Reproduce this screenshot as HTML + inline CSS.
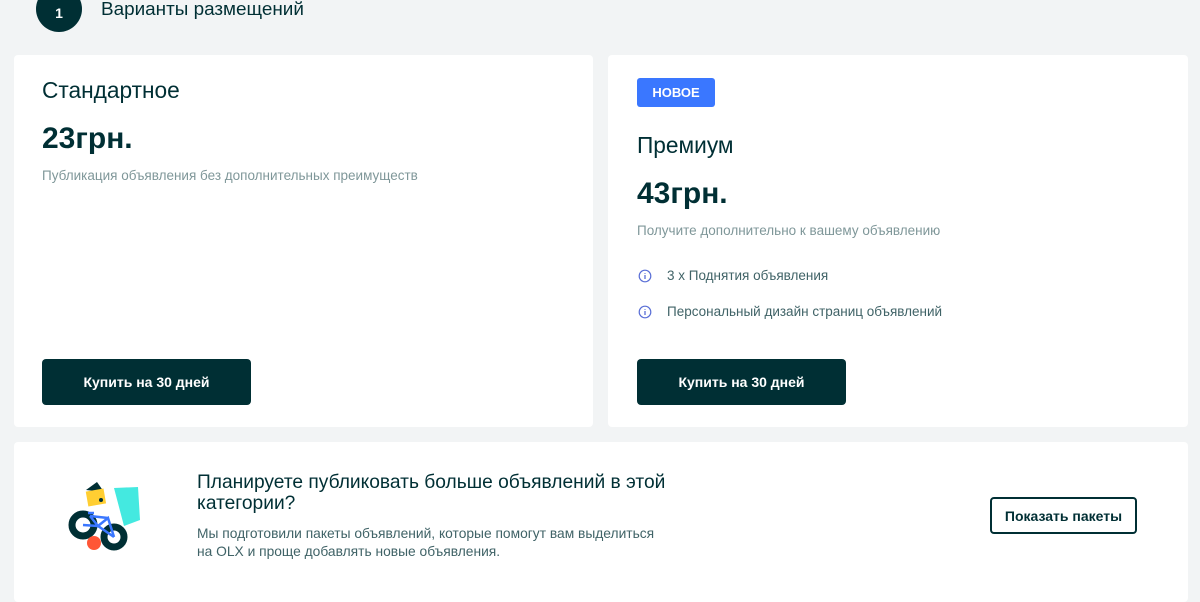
<!DOCTYPE html>
<html><head><meta charset="utf-8"><style>
*{box-sizing:border-box;margin:0;padding:0}
body{width:1200px;height:585px;background:#f2f4f5;font-family:"Liberation Sans",sans-serif;color:#002f34;position:relative;overflow:hidden}
.abs{position:absolute}
.circle{left:36px;top:-14px;width:46px;height:46px;border-radius:50%;background:#002f34;color:#fff;font-weight:bold;font-size:14px;display:flex;align-items:center;justify-content:center;padding-top:8px}
.card{background:#fff;border-radius:4px}
.btn{background:#002f34;color:#fff;font-weight:bold;font-size:14px;width:209px;height:46px;border-radius:4px;display:flex;align-items:center;justify-content:center}
.h{font-size:22.7px}
.price{font-size:30px;font-weight:bold}
.sub{font-size:13.5px;color:#7f9799}
.li{font-size:13.5px;color:#406367}
</style></head><body>
<div class="abs circle">1</div>
<div class="abs" style="left:101px;top:-1px;font-size:18.9px">Варианты размещений</div>

<div class="abs card" style="left:14px;top:55px;width:579px;height:372px"></div>
<div class="abs h" style="left:42px;top:77px">Стандартное</div>
<div class="abs price" style="left:42px;top:122px">23грн.</div>
<div class="abs sub" style="left:42px;top:168px">Публикация объявления без дополнительных преимуществ</div>
<div class="abs btn" style="left:42px;top:359px">Купить на 30 дней</div>

<div class="abs card" style="left:608px;top:55px;width:580px;height:372px"></div>
<div class="abs" style="left:637px;top:78px;width:78px;height:29px;background:#3a77ff;border-radius:3px;color:#fff;font-weight:bold;font-size:13px;display:flex;align-items:center;justify-content:center">НОВОЕ</div>
<div class="abs h" style="left:637px;top:132px">Премиум</div>
<div class="abs price" style="left:637px;top:177px">43грн.</div>
<div class="abs sub" style="left:637px;top:223px">Получите дополнительно к вашему объявлению</div>
<svg class="abs" style="left:638px;top:269px" width="14" height="14" viewBox="0 0 14 14"><circle cx="7" cy="7" r="5.8" fill="none" stroke="#5a6fd6" stroke-width="1.2"/><path d="M7 6v4M7 4v.8" stroke="#5a6fd6" stroke-width="1.3"/></svg>
<div class="abs li" style="left:667px;top:268px">3 х Поднятия объявления</div>
<svg class="abs" style="left:638px;top:305px" width="14" height="14" viewBox="0 0 14 14"><circle cx="7" cy="7" r="5.8" fill="none" stroke="#5a6fd6" stroke-width="1.2"/><path d="M7 6v4M7 4v.8" stroke="#5a6fd6" stroke-width="1.3"/></svg>
<div class="abs li" style="left:667px;top:304px">Персональный дизайн страниц объявлений</div>
<div class="abs btn" style="left:637px;top:359px">Купить на 30 дней</div>

<div class="abs card" style="left:14px;top:442px;width:1174px;height:160px"></div>
<svg class="abs" style="left:66px;top:478px" width="80" height="75" viewBox="0 0 80 75">
<path d="M48 10 L72 9 L74 42 L58 48 Z" fill="#23e5db" opacity=".85"/>
<path d="M20 12 L31 4 L38 14 Z" fill="#002f34"/>
<rect x="21" y="12" width="18" height="15" fill="#ffce32" transform="rotate(-10 30 20)"/>
<circle cx="35" cy="22" r="2" fill="#002f34"/>
<circle cx="17" cy="47" r="11" fill="none" stroke="#002f34" stroke-width="7"/>
<circle cx="48" cy="59" r="10" fill="none" stroke="#002f34" stroke-width="7"/>
<circle cx="28" cy="65" r="7" fill="#ff5636"/>
<path d="M17 47 L32 48 L48 59 M24 38 L32 48 L42 40 L48 59 M24 38 L42 40 M22 35h6" fill="none" stroke="#3a77ff" stroke-width="2.5"/>
</svg>
<div class="abs" style="left:197px;top:472px;font-size:19.2px;line-height:21px;width:500px">Планируете публиковать больше объявлений в этой категории?</div>
<div class="abs sub" style="left:197px;top:525px;line-height:18px;color:#406367;font-size:13.8px">Мы подготовили пакеты объявлений, которые помогут вам выделиться<br>на OLX и проще добавлять новые объявления.</div>
<div class="abs" style="left:990px;top:497px;width:147px;height:37px;border:2px solid #002f34;border-radius:4px;font-weight:bold;font-size:14px;display:flex;align-items:center;justify-content:center">Показать пакеты</div>
</body></html>
